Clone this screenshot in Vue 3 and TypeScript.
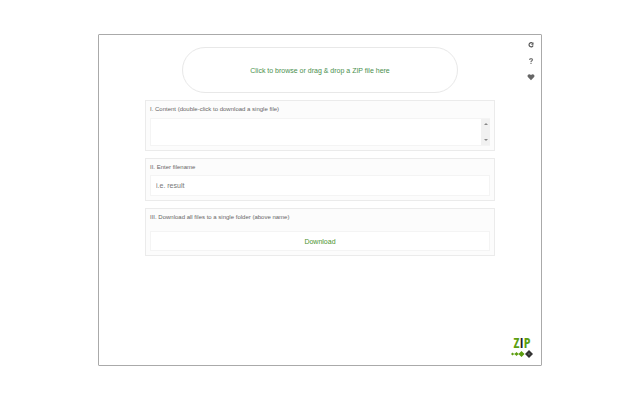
<script setup lang="ts">
import { ref } from 'vue'

const files = ref<string[]>([])
const selected = ref<string[]>([])
const filename = ref<string>('')
const picker = ref<HTMLInputElement | null>(null)

function addFiles(list: FileList | null | undefined): void {
  files.value = Array.from(list ?? []).map((file) => file.name)
}

function onPick(event: Event): void {
  addFiles((event.target as HTMLInputElement).files)
}

function onDrop(event: DragEvent): void {
  addFiles(event.dataTransfer?.files)
}

function reset(): void {
  files.value = []
  selected.value = []
  filename.value = ''
}
</script>

<template>
  <div class="page">
    <div class="window">
      <main class="content">
        <button class="drop" type="button" @click="picker?.click()" @dragover.prevent @drop.prevent="onDrop">
          Click to browse or drag &amp; drop a ZIP file here
        </button>
        <input ref="picker" class="picker" type="file" accept=".zip" aria-label="ZIP file" @change="onPick" />

        <section class="panel">
          <label class="label" for="entries">I. Content (double-click to download a single file)</label>
          <div class="list">
            <select id="entries" v-model="selected" class="entries" multiple>
              <option v-for="file in files" :key="file" :value="file">{{ file }}</option>
            </select>
            <div class="scroll" aria-hidden="true">
              <svg viewBox="0 0 4 2"><path d="M0 2 2 0l2 2z" /></svg>
              <svg viewBox="0 0 4 2"><path d="M0 0h4L2 2z" /></svg>
            </div>
          </div>
        </section>

        <section class="panel name">
          <label class="label" for="filename">II. Enter filename</label>
          <input id="filename" v-model="filename" class="field" type="text" placeholder="i.e. result" />
        </section>

        <section class="panel save">
          <label class="label" for="download">III. Download all files to a single folder (above name)</label>
          <button id="download" class="download" type="button">Download</button>
        </section>
      </main>

      <aside class="side">
        <nav class="tools">
          <button class="tool" type="button" aria-label="Reset" @click="reset">
            <svg viewBox="0 0 8 8">
              <path d="M5.800 2.500A2.100 2.100 0 1 0 6.100 4.600" fill="none" stroke="#555" stroke-width="1.200" />
              <path d="M6.500 1.200v2.500H4z" fill="#555" />
            </svg>
          </button>
          <button class="tool" type="button" aria-label="Help">
            <svg viewBox="0 0 8 8">
              <path d="M2.6 2.9C2.6 1.2 5.500 1.2 5.500 2.8 5.500 3.9 4 3.8 4 5.1" fill="none" stroke="#777" stroke-width="1.2" />
              <path d="M3.400 5.8h1.200v1.100H3.400z" fill="#777" />
            </svg>
          </button>
          <button class="tool" type="button" aria-label="Favourite">
            <svg viewBox="0 0 8 8">
              <path d="M4 7.200 1.100 4.300C-.6 2.300 2 .1 4 2.100 6 .1 8.600 2.300 6.900 4.300z" fill="#666" />
            </svg>
          </button>
        </nav>

        <div class="logo">
          <div class="word"><span>Z</span><span class="dark">I</span><span>P</span></div>
          <svg class="chain" viewBox="0 0 22 8">
            <path d="M0 4 1.500 2.500 3 4 1.500 5.500z M3.500 4 5.500 2 7.500 4 5.500 6z M7.500 4 10.500 1 13.500 4 10.500 7z" fill="#5d9f10" />
            <path d="M1 4h12" stroke="#5d9f10" stroke-width=".5" />
            <path d="M14 4 18 0 22 4 18 8z" fill="#333" />
            <path d="M17 4h2" stroke="#777" stroke-width="1" />
          </svg>
        </div>
      </aside>
    </div>
  </div>
</template>

<style>
body {
  margin: 0;
  background: #fff;
}
</style>

<style scoped>
.page {
  box-sizing: border-box;
  display: flex;
  min-height: 100vh;
  padding: 34px 98px;
  font-family: "Liberation Sans", Arial, sans-serif;
  color: #666;
}
.page * {
  box-sizing: border-box;
}
.window {
  flex: 1;
  display: grid;
  grid-template-columns: 46px 1fr 46px;
  border: 1px solid #aaa;
  border-radius: 1px;
}
button,
input,
select {
  margin: 0;
  font-family: inherit;
}
.content {
  grid-column: 2;
  display: flex;
  flex-direction: column;
  gap: 7px;
  padding-top: 12px;
}
.drop {
  height: 46px;
  margin: 0 37px;
  padding: 0;
  border: 1px solid #e8e8e8;
  border-radius: 23px;
  background: #fff;
  color: #4a8f4e;
  font-size: 7px;
  cursor: pointer;
}
.picker {
  display: none;
}
.panel {
  display: flex;
  flex-direction: column;
  gap: 4px;
  padding: 4px;
  border: 1px solid #ebebeb;
  background: #fcfcfc;
}
.name {
  gap: 3px;
}
.save {
  gap: 9px;
}
.label {
  font-size: 6px;
  line-height: 9px;
}
.list {
  display: flex;
  height: 28px;
  border: 1px solid #f4f4f4;
  border-right: 0;
  background: #fff;
}
.entries {
  flex: 1;
  min-width: 0;
  padding: 0;
  border: 0;
  background: #fff;
  font-size: 7px;
  outline: none;
}
.scroll {
  display: flex;
  flex-direction: column;
  justify-content: space-between;
  align-items: center;
  width: 9px;
  padding: 4px 0;
  background: #f1f1f1;
}
.scroll svg {
  width: 4px;
  height: 2px;
  fill: #888;
}
.field,
.download {
  width: 100%;
  padding: 0 5px;
  border: 1px solid #f4f4f4;
  background: #fff;
  font-size: 7px;
}
.field {
  height: 21px;
  color: #777;
}
.field::placeholder {
  color: #777;
  opacity: 1;
}
.download {
  height: 20px;
  color: #4c9431;
  cursor: pointer;
}
.side {
  display: flex;
  flex-direction: column;
  justify-content: space-between;
  align-items: flex-end;
  padding: 6px 6px 7px 0;
}
.tools {
  display: flex;
  flex-direction: column;
  gap: 8px;
}
.tool {
  display: block;
  width: 8px;
  height: 8px;
  padding: 0;
  border: 0;
  background: none;
  cursor: pointer;
}
.tool svg {
  display: block;
  width: 8px;
  height: 8px;
}
.logo {
  width: 22px;
  margin-right: 2px;
}
.word {
  font-family: "Open Sans Condensed", "Liberation Sans Narrow", "Open Sans", sans-serif;
  font-size: 14px;
  font-weight: 700;
  line-height: 14px;
  text-align: center;
  color: #5d9f10;
}
.dark {
  color: #222;
}
.chain {
  display: block;
  width: 22px;
  height: 8px;
}
</style>
